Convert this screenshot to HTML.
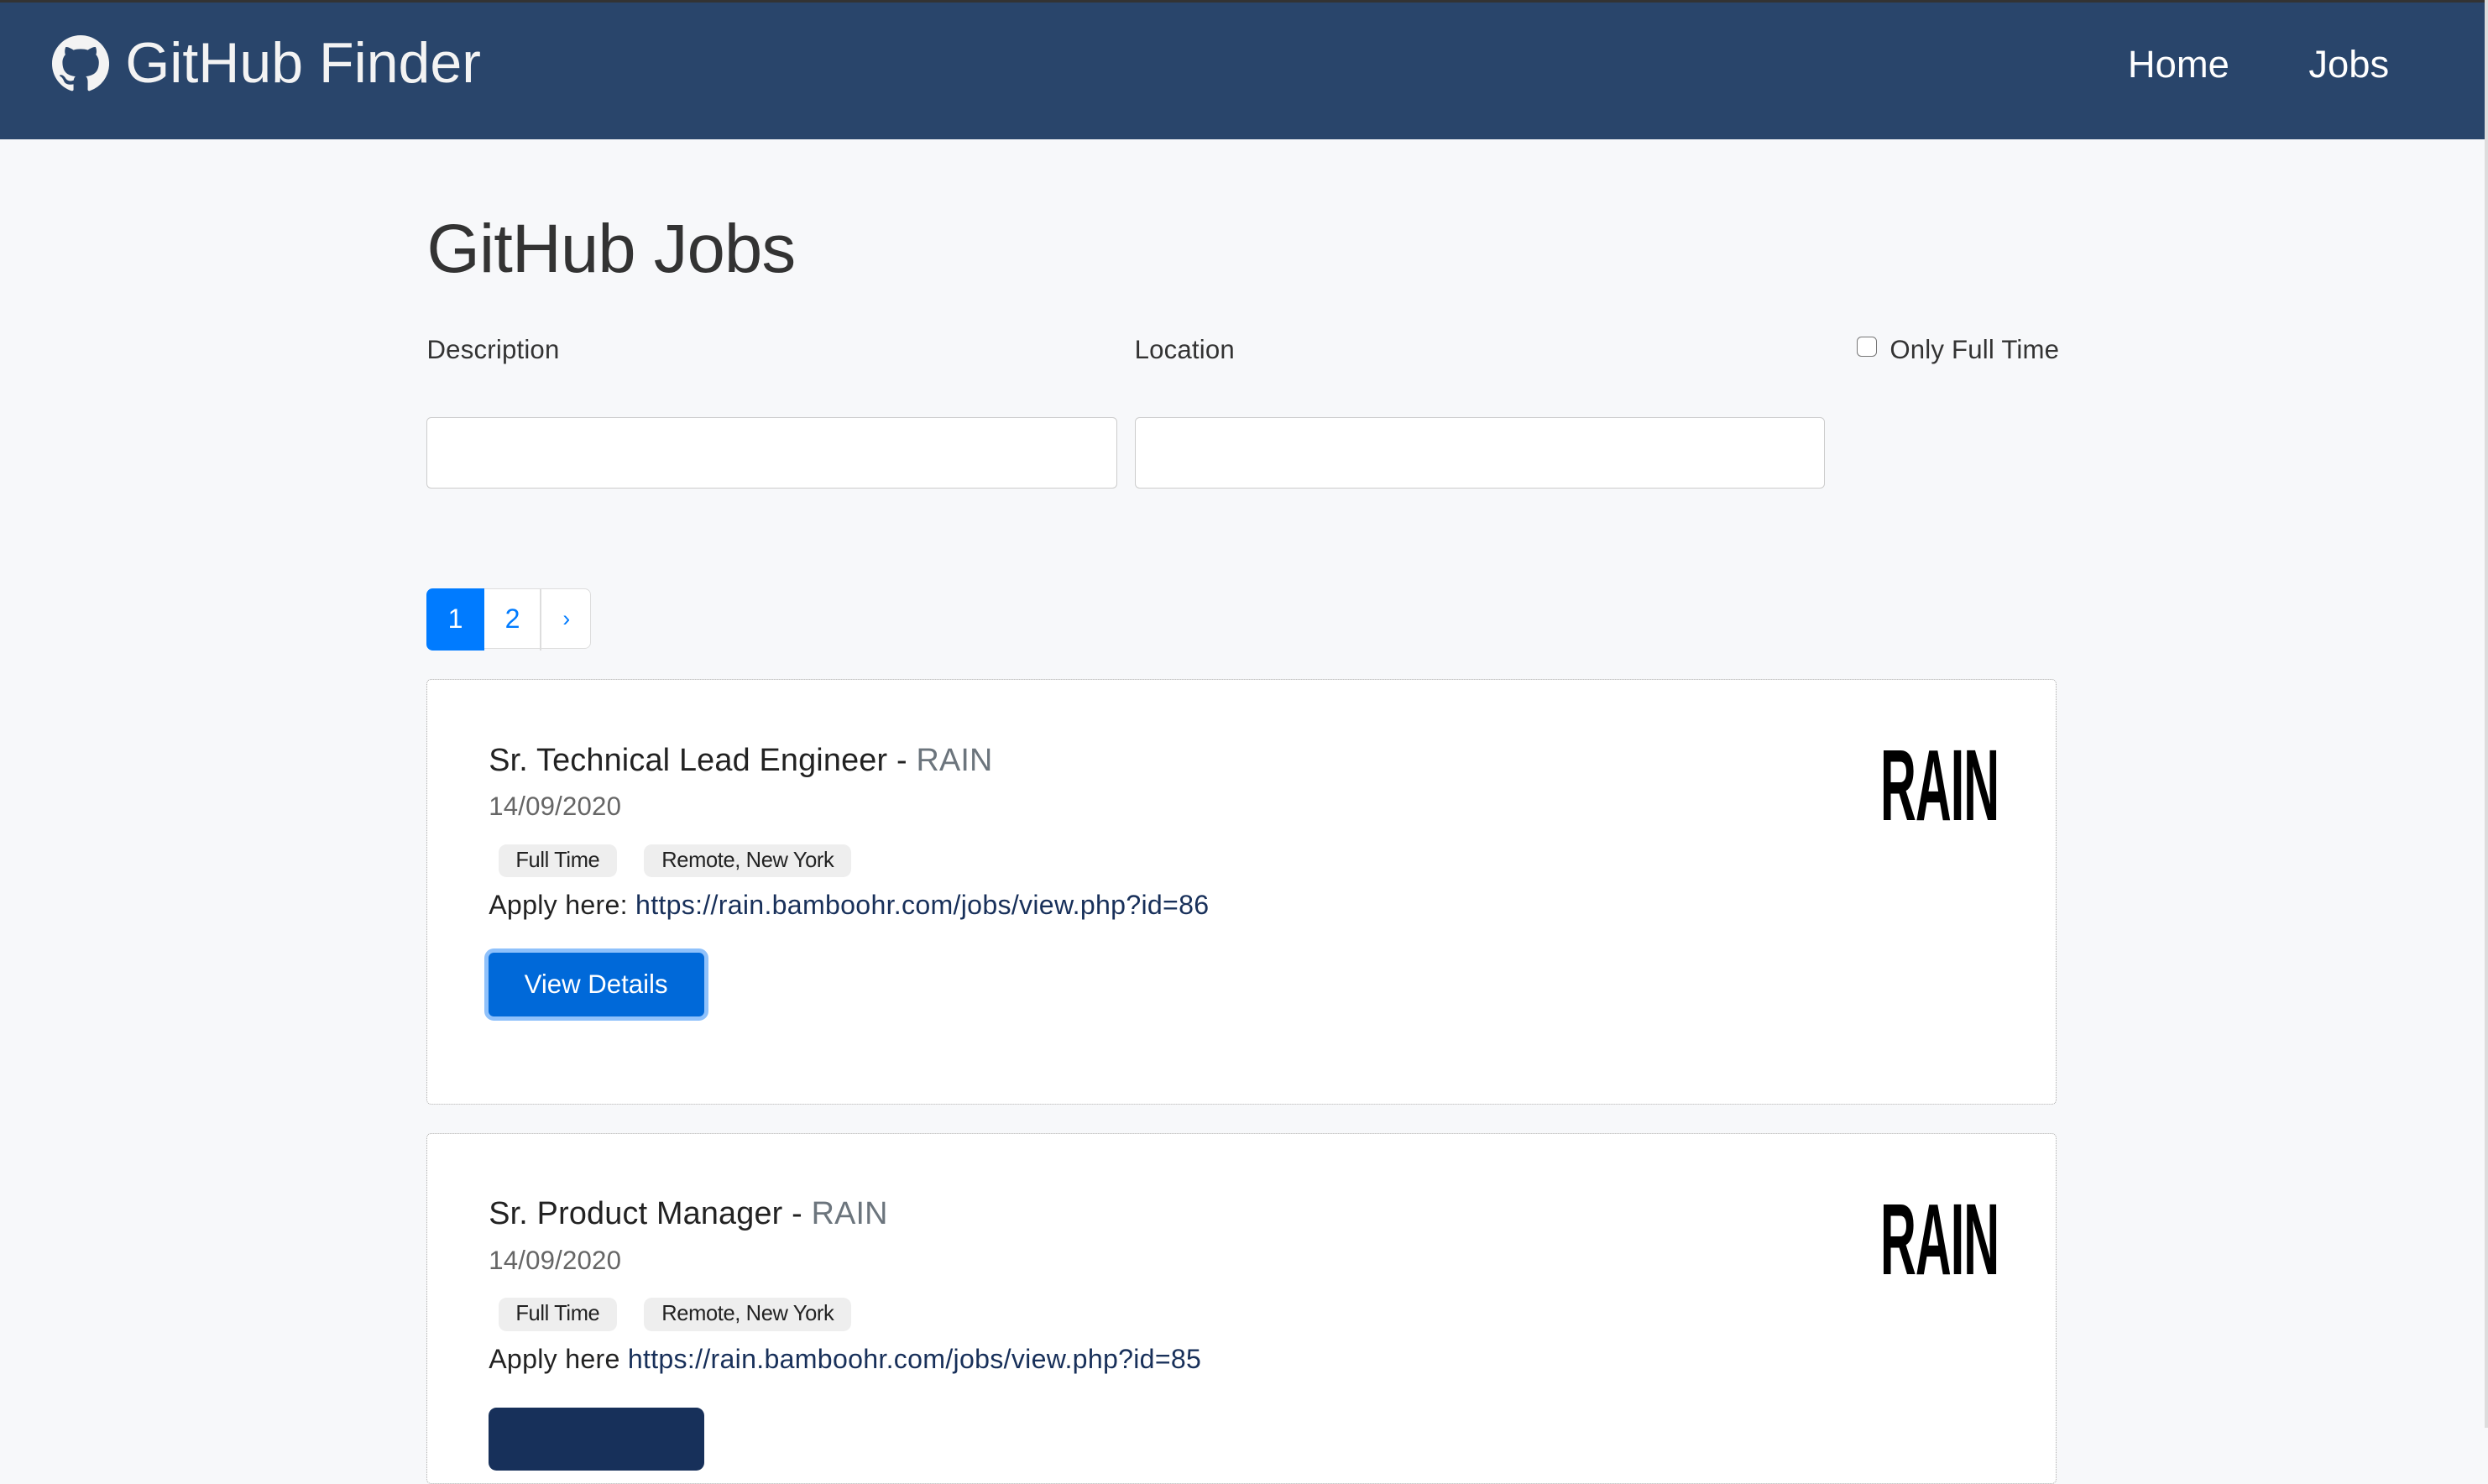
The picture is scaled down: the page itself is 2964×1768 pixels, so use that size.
<!DOCTYPE html>
<html><head><meta charset="utf-8"><style>
html,body{margin:0;padding:0}
body{width:1568px;height:900px;overflow:hidden;zoom:1.8903;background:#f7f8fa;font-family:"Liberation Sans",sans-serif;color:#333;position:relative}
.a{position:absolute;white-space:nowrap}
.nav{left:0;top:0;width:1568px;height:88px;background:#29456b;border-top:2px solid #333;box-sizing:border-box}
.rb{right:0;top:0;width:2px;height:900px;background:#ddd}
.inp{background:#fff;border:1px solid #ccc;border-radius:3px;height:44px;width:434px;top:263px}
.card{left:269px;width:1026px;background:#fff;border:1px dotted #aaa;border-radius:3px}
.badge{background:#eee;border-radius:5px;font-size:13.5px;color:#222;height:21px;line-height:21px;padding:0 11px;letter-spacing:-.2px}
.t{font-size:20px;color:#222;letter-spacing:.1px}
.d{font-size:16.5px;color:#666;letter-spacing:.1px}
.ap{font-size:17px;color:#222;letter-spacing:.15px}
.ap span{color:#18305a}
.rain{font-family:"Liberation Sans",sans-serif;font-weight:bold;font-size:64px;line-height:1;color:#000;transform:scaleX(.49);transform-origin:left top;letter-spacing:-1px}
</style></head><body>
<div class="a nav"></div>
<svg class="a" style="left:33px;top:22px" width="36" height="36" viewBox="0 0 16 16"><path fill="#f3f3f3" d="M8 0C3.580 0 0 3.580 0 8c0 3.540 2.290 6.530 5.470 7.590.4.07.55-.17.55-.38 0-.19-.01-.82-.01-1.490-2.010.37-2.530-.49-2.690-.94-.09-.23-.48-.94-.82-1.130-.28-.15-.68-.52-.01-.53.63-.01 1.080.58 1.230.82.72 1.210 1.870.87 2.330.66.07-.52.28-.87.51-1.070-1.780-.2-3.640-.89-3.640-3.950 0-.87.31-1.590.82-2.150-.08-.2-.36-1.020.08-2.120 0 0 .67-.21 2.200.82.64-.18 1.320-.27 2-.27.68 0 1.360.09 2 .27 1.530-1.040 2.200-.82 2.200-.82.44 1.100.16 1.920.08 2.120.51.56.82 1.270.82 2.150 0 3.070-1.870 3.750-3.650 3.950.29.25.54.73.54 1.480 0 1.070-.01 1.930-.01 2.200 0 .21.15.46.55.38A8.013 8.013 0 0016 8c0-4.420-3.580-8-8-8z"/></svg>
<div class="a" style="left:79px;top:19px;font-size:36px;color:#f3f3f3;letter-spacing:0">GitHub Finder</div>
<div class="a" style="left:1341px;top:27px;font-size:24px;color:#fff">Home</div>
<div class="a" style="left:1455px;top:27px;font-size:24px;color:#fff">Jobs</div>
<div class="a rb"></div>

<div class="a" style="left:269px;top:132px;font-size:43px;color:#333;letter-spacing:-.4px">GitHub Jobs</div>
<div class="a" style="left:269px;top:211px;font-size:16.5px;letter-spacing:.1px">Description</div>
<div class="a" style="left:715px;top:211px;font-size:16.5px;letter-spacing:.1px">Location</div>
<div class="a" style="left:1170px;top:212px;width:12px;height:12px;border:1px solid #777;border-radius:3px;background:#fff"></div>
<div class="a" style="left:1191px;top:211px;font-size:16.5px;letter-spacing:.1px">Only Full Time</div>
<div class="a inp" style="left:269px"></div>
<div class="a inp" style="left:715px"></div>

<div class="a" style="left:269px;top:371px;width:36px;height:39px;background:#007bff;border-radius:4px 0 0 4px;color:#fff;font-size:17px;line-height:39px;text-align:center">1</div>
<div class="a" style="left:305px;top:371px;width:67px;height:37px;background:#fff;border:1px solid #ddd;border-left:0;border-radius:0 4px 4px 0"></div>
<div class="a" style="left:340px;top:371px;width:1px;height:39px;background:#ddd"></div>
<div class="a" style="left:305px;top:371px;width:36px;line-height:39px;text-align:center;color:#007bff;font-size:17px">2</div>
<div class="a" style="left:341px;top:371px;width:32px;line-height:39px;text-align:center;color:#007bff;font-size:14px">›</div>

<div class="a card" style="top:428px;height:267px"></div>
<div class="a t" style="left:308px;top:468px">Sr. Technical Lead Engineer - <span style="color:#6c757d">RAIN</span></div>
<div class="a d" style="left:308px;top:499px">14/09/2020</div>
<div class="a badge" style="left:314px;top:532px">Full Time</div>
<div class="a badge" style="left:406px;top:532px">Remote, New York</div>
<div class="a ap" style="left:308px;top:561px">Apply here: <span>https://rain.bamboohr.com/jobs/view.php?id=86</span></div>
<div class="a" style="left:305px;top:598px;width:136px;height:40px;background:#0069d9;border:3px solid #8fc1fb;border-radius:6px;color:#fff;font-size:16.5px;line-height:40px;text-align:center">View Details</div>
<div class="a rain" style="left:1185px;top:463px">RAIN</div>

<div class="a card" style="top:714px;height:220px"></div>
<div class="a t" style="left:308px;top:754px">Sr. Product Manager - <span style="color:#6c757d">RAIN</span></div>
<div class="a d" style="left:308px;top:785px">14/09/2020</div>
<div class="a badge" style="left:314px;top:818px">Full Time</div>
<div class="a badge" style="left:406px;top:818px">Remote, New York</div>
<div class="a ap" style="left:308px;top:847px">Apply here <span>https://rain.bamboohr.com/jobs/view.php?id=85</span></div>
<div class="a" style="left:308px;top:887px;width:136px;height:40px;background:#17305a;border-radius:5px"></div>
<div class="a rain" style="left:1185px;top:749px">RAIN</div>
</body></html>
